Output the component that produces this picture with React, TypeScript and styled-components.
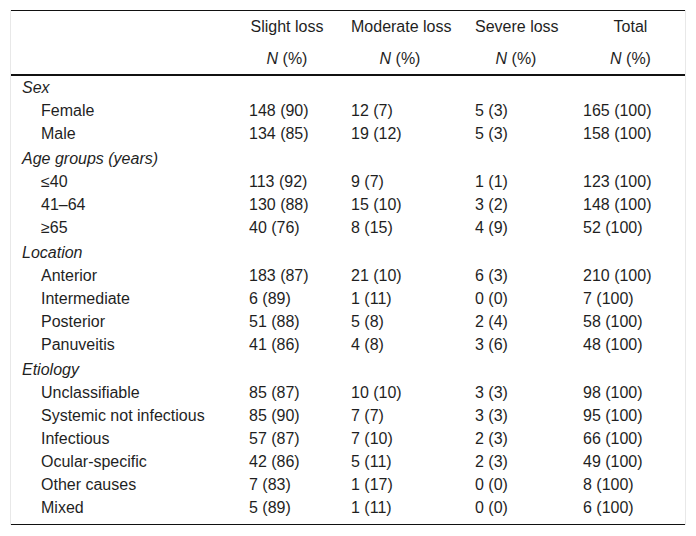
import styled, { createGlobalStyle } from "styled-components";

const GlobalStyle = createGlobalStyle`
  body {
    margin: 0;
    background: #fff;
    font-family: "Liberation Sans", Arial, sans-serif;
    color: #1f1f1f;
  }
`;

type Row = { label: string; values: string[] };
type Group = { title: string; rows: Row[] };

const groups: Group[] = [
  {
    title: "Sex",
    rows: [
      { label: "Female", values: ["148 (90)", "12 (7)", "5 (3)", "165 (100)"] },
      { label: "Male", values: ["134 (85)", "19 (12)", "5 (3)", "158 (100)"] },
    ],
  },
  {
    title: "Age groups (years)",
    rows: [
      { label: "≤40", values: ["113 (92)", "9 (7)", "1 (1)", "123 (100)"] },
      { label: "41–64", values: ["130 (88)", "15 (10)", "3 (2)", "148 (100)"] },
      { label: "≥65", values: ["40 (76)", "8 (15)", "4 (9)", "52 (100)"] },
    ],
  },
  {
    title: "Location",
    rows: [
      { label: "Anterior", values: ["183 (87)", "21 (10)", "6 (3)", "210 (100)"] },
      { label: "Intermediate", values: ["6 (89)", "1 (11)", "0 (0)", "7 (100)"] },
      { label: "Posterior", values: ["51 (88)", "5 (8)", "2 (4)", "58 (100)"] },
      { label: "Panuveitis", values: ["41 (86)", "4 (8)", "3 (6)", "48 (100)"] },
    ],
  },
  {
    title: "Etiology",
    rows: [
      { label: "Unclassifiable", values: ["85 (87)", "10 (10)", "3 (3)", "98 (100)"] },
      { label: "Systemic not infectious", values: ["85 (90)", "7 (7)", "3 (3)", "95 (100)"] },
      { label: "Infectious", values: ["57 (87)", "7 (10)", "2 (3)", "66 (100)"] },
      { label: "Ocular-specific", values: ["42 (86)", "5 (11)", "2 (3)", "49 (100)"] },
      { label: "Other causes", values: ["7 (83)", "1 (17)", "0 (0)", "8 (100)"] },
      { label: "Mixed", values: ["5 (89)", "1 (11)", "0 (0)", "6 (100)"] },
    ],
  },
];

const columns = ["Slight loss", "Moderate loss", "Severe loss", "Total"];
const widths = [219, 102, 124, 108, 121];

const App = () => {
  return (
    <>
      <GlobalStyle />
      <Frame>
        <Table>
          <colgroup>
            {widths.map((w, i) => (
              <col key={i} style={{ width: `${w}px` }} />
            ))}
          </colgroup>
          <thead>
            <tr>
              <HeadCell />
              {columns.map((c) => (
                <HeadCell key={c}>{c}</HeadCell>
              ))}
            </tr>
            <tr>
              <HeadCell $last />
              {columns.map((c) => (
                <HeadCell key={c} $last>
                  <em>N</em> (%)
                </HeadCell>
              ))}
            </tr>
          </thead>
          {groups.map((g, gi) => (
            <tbody key={g.title}>
              <tr>
                <GroupCell colSpan={5} $first={gi === 0}>
                  {g.title}
                </GroupCell>
              </tr>
              {g.rows.map((r) => (
                <tr key={r.label}>
                  <LabelCell>{r.label}</LabelCell>
                  {r.values.map((v, vi) => (
                    <ValueCell key={vi}>{v}</ValueCell>
                  ))}
                </tr>
              ))}
            </tbody>
          ))}
          <tfoot>
            <tr>
              <EndCell colSpan={5} />
            </tr>
          </tfoot>
        </Table>
      </Frame>
    </>
  );
};

export default App;

const Frame = styled.div`
  margin: 10px 0 0 10px;
  width: 674px;
  border-left: 1px solid #e8e8e8;
  border-right: 1px solid #e8e8e8;
`;

const Table = styled.table`
  width: 674px;
  table-layout: fixed;
  border-collapse: collapse;
  border-top: 1px solid #111;
  border-bottom: 1px solid #111;
  font-family: "Liberation Sans", Arial, Helvetica, sans-serif;
  font-size: 16px;
  line-height: 18px;
  color: #1f1f1f;
`;

const HeadCell = styled.th<{ $last?: boolean }>`
  height: ${(p) => (p.$last ? "31px" : "32px")};
  padding: 0 7px 0 19px;
  font-weight: 400;
  text-align: center;
  vertical-align: middle;
  border-bottom: ${(p) => (p.$last ? "2px solid #111" : "none")};
  white-space: nowrap;

  em {
    font-style: italic;
  }
`;

const GroupCell = styled.td<{ $first?: boolean }>`
  height: ${(p) => (p.$first ? "24px" : "25px")};
  padding: ${(p) => (p.$first ? "1px 0 0 11px" : "2px 0 0 11px")};
  box-sizing: border-box;
  font-style: italic;
  vertical-align: middle;
`;

const LabelCell = styled.td`
  height: 23px;
  padding: 0 0 0 30px;
  vertical-align: middle;
  white-space: nowrap;
`;

const ValueCell = styled.td`
  height: 23px;
  padding: 0 0 0 19px;
  vertical-align: middle;
  white-space: nowrap;
`;

const EndCell = styled.td`
  height: 5px;
  padding: 0;
`;
